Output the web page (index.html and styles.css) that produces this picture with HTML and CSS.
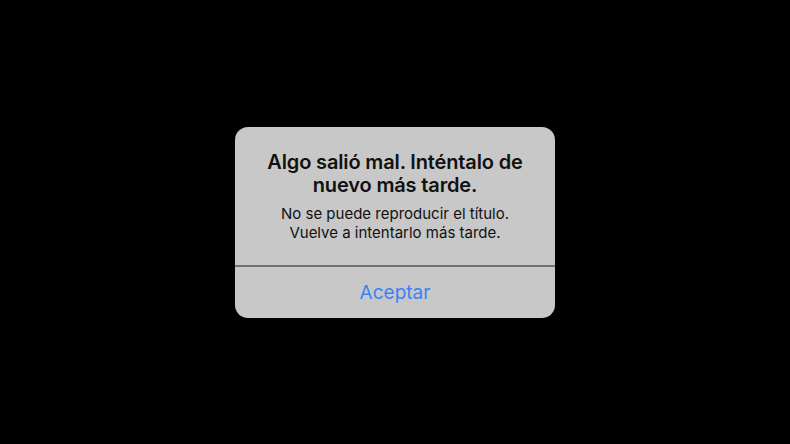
FILE: index.html
```html
<!DOCTYPE html>
<html lang="es">
<head>
      <meta charset="UTF-8">
      <meta name="viewport" content="width=device-width, initial-scale=1.0">
      <title>Error</title>
      <link rel="stylesheet" href="styles.css">
</head>
<body>
      <div class="alert" role="alertdialog">
            <div class="alert-body">
                  <h1 class="alert-title">Algo salió mal. Inténtalo de nuevo más tarde.</h1>
                  <p class="alert-message">No se puede reproducir el título. Vuelve a intentarlo más tarde.</p>
            </div>
            <button class="alert-button">Aceptar</button>
      </div>
</body>
</html>
```

FILE: styles.css
```css
:root {
	--backdrop: #000;
	--sheet: #c8c8c8;
	--ink: #111;
	--rule: #707070;
	--accent: #3a82f6;
}
html {
	box-sizing: border-box;
}
*, *:before, *:after {
	box-sizing: inherit;
}
body {
	margin: 0;
	display: grid;
	min-block-size: 100vh;
	place-content: center;
	background: var(--backdrop);
	font-family: Inter, "Noto Sans", sans-serif;
	color: var(--ink);
}
.alert {
	width: 320px;
	background: var(--sheet);
	border-radius: 13px;
	overflow: hidden;
	display: flex;
	flex-direction: column;
}
.alert-body {
	padding: 24px 24px 23px;
	text-align: center;
	border-bottom: 2px solid var(--rule);
}
.alert-title {
	margin: 0;
	font-size: 20px;
	font-weight: 600;
	line-height: 23px;
	letter-spacing: -0.15px;
}
.alert-message {
	margin: 7px 12px 0;
	font-size: 15px;
	line-height: 19px;
}
.alert-button {
	height: 51px;
	border: 0;
	background: none;
	font: inherit;
	font-size: 19px;
	color: var(--accent);
	cursor: pointer;
}
```
